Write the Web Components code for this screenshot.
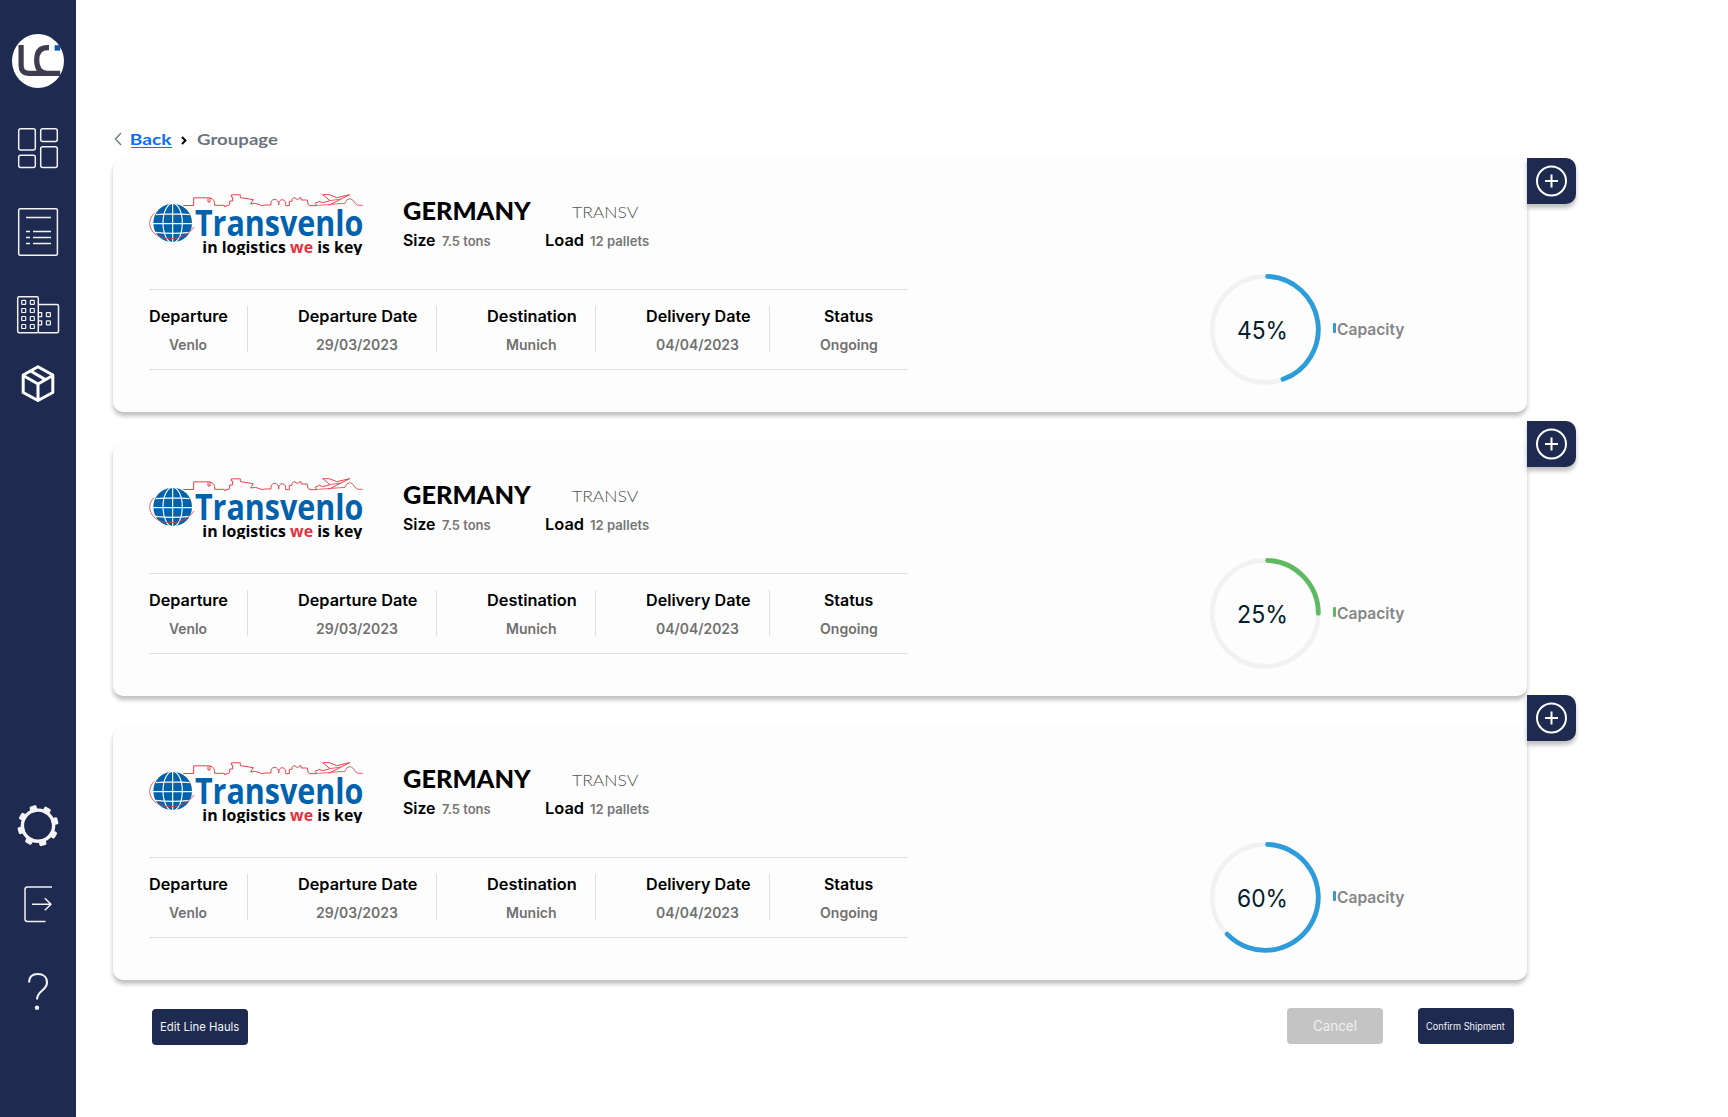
<!DOCTYPE html>
<html lang="en">
<head>
<meta charset="utf-8">
<title>Groupage</title>
<style>
html,body{margin:0;height:100%;background:#fff;font-family:Inter,"Liberation Sans",sans-serif;overflow:hidden}
</style>
</head>
<body>
<groupage-page></groupage-page>
<script>
const define = (name, html, setup) => {
  const tpl = document.createElement('template');
  tpl.innerHTML = html;
  customElements.define(name, class extends HTMLElement {
    connectedCallback() {
      if (this.shadowRoot) return;
      this.attachShadow({ mode: 'open' }).appendChild(tpl.content.cloneNode(true));
      if (setup) setup(this, this.shadowRoot);
    }
  });
};

/* Text whose visible ink spans exactly `w` pixels. */
const ctx = document.createElement('canvas').getContext('2d');
define('fit-text', `<style>
:host{display:block;flex:none;white-space:nowrap}
span{display:inline-block;transform-origin:0 0}
</style><span><slot></slot></span>`, (host, root) => {
  const cs = getComputedStyle(host), w = +host.getAttribute('w');
  ctx.font = `${cs.fontWeight} ${cs.fontSize} ${cs.fontFamily}`;
  const m = ctx.measureText(host.textContent);
  const ink = m.actualBoundingBoxLeft + m.actualBoundingBoxRight;
  const k = w / ink;
  host.style.width = w + 'px';
  root.querySelector('span').style.transform = `translateX(${m.actualBoundingBoxLeft * k}px) scaleX(${k})`;
});

const teeth = Array.from({ length: 8 }, (_, i) =>
  `<rect x="34.4" y="805.2" width="7.2" height="6.5" rx="1.5" transform="rotate(${-15 + i * 45} 38 825.7)"/>`).join('');
const win = (x, y) => `<rect x="${x - 2}" y="${y - 2}" width="4" height="4" rx=".6"/>`;
const windows = [302.4, 310.5, 318.5, 326.5].map(y => win(23.7, y) + win(32.3, y)).join('') +
  [314.7, 322.8].map(y => `<path d="M39 ${y - 2}h2.7v4h-2.7"/>` + win(48.4, y)).join('');

define('side-bar', `<style>
:host{display:flex;flex-direction:column;flex:none;width:76px;height:1117px;box-sizing:border-box;padding:30px 0 103px;background:#1e2a4f}
svg{display:block;width:76px;flex:none;fill:none;stroke:#f2f2f4;stroke-width:1.5;stroke-linejoin:round}
.g{margin-top:32px}
</style>
<svg height="62" viewBox="0 30 76 62"><g stroke="none"><rect x="12" y="34" width="52" height="54" rx="26" ry="27" fill="#fff"/><rect x="54.6" y="45.2" width="5.6" height="5.4" fill="#0d55a5"/></g><path d="M21.1 45V65.5Q21.1 73.3 28.5 73.3H60.2M49 47.7H47.5Q36.7 47.7 36.7 60T46 73" stroke="#403c50" stroke-width="5.2"/></svg>
<svg class="g" height="48" viewBox="0 124 76 48"><rect x="18.7" y="128.7" width="16.6" height="21.2" rx="2"/><rect x="40.7" y="128.7" width="16.6" height="12.7" rx="2"/><rect x="18.7" y="155.2" width="16.6" height="12.2" rx="2"/><rect x="40.7" y="146.7" width="16.6" height="20.7" rx="2"/></svg>
<svg class="g" height="56" viewBox="0 204 76 56"><rect x="18.7" y="208.7" width="38.7" height="46.6" rx="1.5"/><path d="M26 217.5H51M26 231.5h4M33 231.5H51M26 237.5h4M33 237.5H51M26 243.5h4M33 243.5H51"/></svg>
<svg class="g" height="45" viewBox="0 292 76 45"><rect x="17.7" y="296.7" width="20.6" height="36" rx="1.5"/><path d="M38.3 304.5H57q1.5 0 1.5 1.500v25.2q0 1.500-1.500 1.500H38.300"/><g stroke-width="1.2">${windows}</g></svg>
<svg style="margin-top:25px" height="44" viewBox="0 362 76 44"><path stroke="#fff" stroke-width="3" d="M38 366.700 52.800 375V392.500L38 400.500 23.200 392.500V375ZM23.200 375.500 38 384 52.800 375.500M38 384V400.500M30.600 371 45.400 379.600"/></svg>
<svg style="margin-top:auto" height="48" viewBox="0 802 76 48"><circle cx="38" cy="825.7" r="15.6" stroke-width="3.4" stroke="#f5f5f5"/><g fill="#f5f5f5" stroke="none">${teeth}</g></svg>
<svg class="g" height="44" viewBox="0 882 76 44"><path d="M52 887H27.500Q25 887 25 889.500V919Q25 921.500 27.500 921.500H45.500M32 904.300H51M44.800 898.300 51 904.300 44.800 910.300"/></svg>
<svg style="margin-top:42px" height="46" viewBox="0 968 76 46"><path stroke-width="2.1" d="M29 982.500C29 976.500 33 974 38 974S47 977 47 982.500C47 991 37 990 37 999.500"/><circle cx="37" cy="1007.700" r="2.200" fill="#f2f2f4" stroke="none"/></svg>`);

define('bread-crumb', `<style>
:host{display:flex;height:20px;font:700 16px/20px Lato,sans-serif;color:#6c757d}
svg{display:block;width:8px;height:14px;margin:3px 9px 0 0;fill:none;stroke:#6c757d;stroke-width:1.3}
.b{color:#0d6efd;border-bottom:1px solid #0d6efd;height:18px}
.s{width:6px;margin:7px 10px 0 9px;stroke:#000;stroke-width:2}
</style>
<svg viewBox="0 0 8 14"><path d="M7 1 1.500 7 7 13"/></svg>
<fit-text class="b" w="41">Back</fit-text>
<svg class="s" viewBox="0 0 6 14"><path d="M1 1 4.400 4.500 1 8"/></svg>
<fit-text w="81.5">Groupage</fit-text>`);

define('company-logo', `<style>:host{display:block;width:215px;height:62px;flex:none}svg{display:block}</style>
<svg width="215" height="62" viewBox="144 216 645 186" fill="none">
<g stroke="#e8414d" stroke-width="3" stroke-linejoin="round">
<path d="M250 253.500H281V230.500H330V243H324V232M330 231Q345 234 344 253H373V257L389 251V240H398V228H394V221.500H421V230L460 236 452 249 466 247 487 254 494 252H513Q511 236 524 235 536 236 536 252 536 237 547 236 558 237 557 254H568V241H576V235L582 229 592 236 602 229 604 237H622L624 250 630 254H652L645 247 658 241 668 245 690 239 668 221 688 221 710 230 749 221 686 253"/>
<path d="M690 239 722 234M655 253 735 247Q739 233 749 233 760 234 765 247L774 253H788" stroke-width="2.5"/></g>
<circle cx="218" cy="306" r="58" fill="#0061ad"/>
<g stroke="#fdfdfd" stroke-width="3.5"><path d="M218 247V365M158 308H278M168 281Q218 276 268 281M166 334Q218 340 270 334"/><ellipse cx="218" cy="306" rx="29" ry="59"/></g>
<path d="M163 277C148 290 144 312 157 330 175 360 250 365 282 318" stroke="#e8414d" stroke-width="2.5"/>
<text x="285" y="344" textLength="505" lengthAdjust="spacingAndGlyphs" font-family="Open Sans" font-weight="700" font-size="107" fill="#0061ad">Transvenlo</text>
<text x="307" y="395" textLength="480" lengthAdjust="spacingAndGlyphs" font-family="Open Sans" font-weight="700" font-size="50" fill="#050505">in logistics <tspan fill="#e8303f">we</tspan> is key</text>
</svg>`);

define('info-cell', `<style>
:host{display:flex;flex-direction:column;align-items:center;box-sizing:border-box;height:46px;padding:0 20px 0 50px;border-right:1px solid #dedede;font:600 16px/20px Inter,sans-serif;color:#000}
:host([first]){padding-left:0}
:host([last]){padding:0 31px 0 49px;border:0}
::slotted(:not([slot])){margin-left:1px}
::slotted([slot=v]){font-size:14px;color:#707070;margin-top:9px}
</style><slot></slot><slot name="v"></slot>`);

define('capacity-gauge', `<style>
:host{display:flex;width:200px;height:113px}
.r{display:grid;width:113px;height:113px;flex:none}
.r>*{grid-area:1/1}
.p{font:400 24px/30px Inter,sans-serif;color:#04202c;margin:43px 0 0 28.500px}
i{width:3.200px;height:10px;border-radius:1px;margin:50px 1.300px 0 11px}
.c{font:600 16px/20px Inter,sans-serif;color:#868686;margin-top:46px}
</style>
<div class="r"><svg width="113" height="113" viewBox="0 0 113 113" fill="none" stroke-width="4.800"><circle cx="56.300" cy="56.300" r="53" stroke="#f2f2f2"/><path stroke-linecap="round"/></svg></div><i></i><fit-text class="c" w="68">Capacity</fit-text>`, (host, root) => {
  const a = +host.getAttribute('angle') * Math.PI / 180, s = 2.5 * Math.PI / 180, col = host.getAttribute('color'), c = 56.3, r = 53;
  const pt = t => `${c + r * Math.sin(t)} ${c - r * Math.cos(t)}`;
  const p = root.querySelector('path');
  p.setAttribute('d', `M${pt(s)}A${r} ${r} 0 ${a > Math.PI ? 1 : 0} 1 ${pt(a)}`);
  p.setAttribute('stroke', col);
  root.querySelector('i').style.background = col;
  const label = document.createElement('fit-text');
  label.className = 'p'; label.setAttribute('w', 47.5); label.textContent = host.getAttribute('value');
  root.querySelector('.r').append(label);
});

define('haul-card', `<style>
:host{display:flex;box-sizing:border-box;width:1414px;height:254px;background:#fdfdfd;border-radius:10px;box-shadow:0 4px 4px rgba(0,0,0,.25);padding-left:36px}
.l{width:759px;flex:none}
.h{display:flex;height:131px;box-sizing:border-box}
company-logo{margin:35px 0 0 -1px}
.n{margin:37px 0 0 40px}
.a,.b{display:flex}
.a{height:30px;margin-bottom:5px}
.g{font:900 24px/32px Lato,sans-serif}
.t{font:300 16.500px/28px Lato,sans-serif;color:#555;margin:3px 0 0 40px}
.b{font:600 16px/20px Inter,sans-serif}
.v{font-size:13px;line-height:22px;color:#767676;margin-left:6.500px}
.x{margin-left:56px}
.d{display:grid;grid-template-columns:99px 189px 159px 174px 138px;height:81px;box-sizing:border-box;border:solid #dedede;border-width:1px 0;padding-top:16px}
capacity-gauge{margin:115px 0 0 301px}
</style>
<div class="l">
<div class="h"><company-logo></company-logo><div class="n">
<div class="a"><fit-text class="g" w="129">GERMANY</fit-text><fit-text class="t" w="66.5">TRANSV</fit-text></div>
<div class="b"><fit-text w="32">Size</fit-text><fit-text class="v" w="48.5">7.5 tons</fit-text><fit-text class="x" w="37">Load</fit-text><fit-text class="v" w="59">12 pallets</fit-text></div>
</div></div>
<div class="d">
<info-cell first><fit-text w="77.5">Departure</fit-text><fit-text slot="v" w="37.5">Venlo</fit-text></info-cell>
<info-cell><fit-text w="118">Departure Date</fit-text><fit-text slot="v" w="82">29/03/2023</fit-text></info-cell>
<info-cell><fit-text w="88">Destination</fit-text><fit-text slot="v" w="49">Munich</fit-text></info-cell>
<info-cell><fit-text w="103">Delivery Date</fit-text><fit-text slot="v" w="83">04/04/2023</fit-text></info-cell>
<info-cell last><fit-text w="49.5">Status</fit-text><fit-text slot="v" w="57">Ongoing</fit-text></info-cell>
</div></div>
<slot></slot>`, (host, root) => {
  const g = document.createElement('capacity-gauge');
  for (const k of ['value', 'angle', 'color']) g.setAttribute(k, host.getAttribute(k));
  root.querySelector('slot').replaceWith(g);
});

define('add-tab', `<style>
:host{display:block;width:49px;height:46px;background:#1e2a4f;border-radius:0 10px 10px 0;box-shadow:0 4px 4px rgba(0,0,0,.25)}
svg{display:block}
</style><svg width="49" height="46" fill="none" stroke="#fff" stroke-width="2"><circle cx="24.500" cy="23" r="14.500"/><path d="M18 23H31M24.500 16.500V29.500"/></svg>`);

define('action-button', `<style>
:host{display:flex;justify-content:center;width:96px;height:36px;border-radius:4px;background:#1e2a4f;color:#f5f5f7;line-height:36px;font-weight:400}
:host([muted]){background:#c4c4c4;color:#f0f0f0}
</style><slot></slot>`);

define('groupage-page', `<style>
:host{display:flex;width:1728px;height:1117px;background:#fff}
main{display:flex;flex-direction:column;padding:129px 0 0 37px}
bread-crumb{margin:0 0 9px 1px}
.w{display:flex}
.c{display:flex;flex-direction:column;gap:30px}
.f{display:flex;padding:28px 0 0 38.500px}
</style>
<side-bar></side-bar>
<main>
<bread-crumb></bread-crumb>
<div class="w"><div class="c">
<haul-card value="45%" angle="160.6" color="#2d9cdb"></haul-card>
<haul-card value="25%" angle="90" color="#5dba60"></haul-card>
<haul-card value="60%" angle="226" color="#2d9cdb"></haul-card>
</div><div>
<add-tab></add-tab><add-tab style="margin-top:217px"></add-tab><add-tab style="margin-top:228px"></add-tab>
</div></div>
<div class="f">
<action-button style="margin-top:1px;font-size:12px"><fit-text style="margin-left:1px" w="78">Edit Line Hauls</fit-text></action-button>
<action-button muted style="margin-left:1039.5px;font-size:14px"><fit-text style="margin-right:1px" w="43.5">Cancel</fit-text></action-button>
<action-button style="margin-left:35px;font-size:10px"><fit-text w="79.5">Confirm Shipment</fit-text></action-button>
</div>
</main>`);
</script>
</body>
</html>
